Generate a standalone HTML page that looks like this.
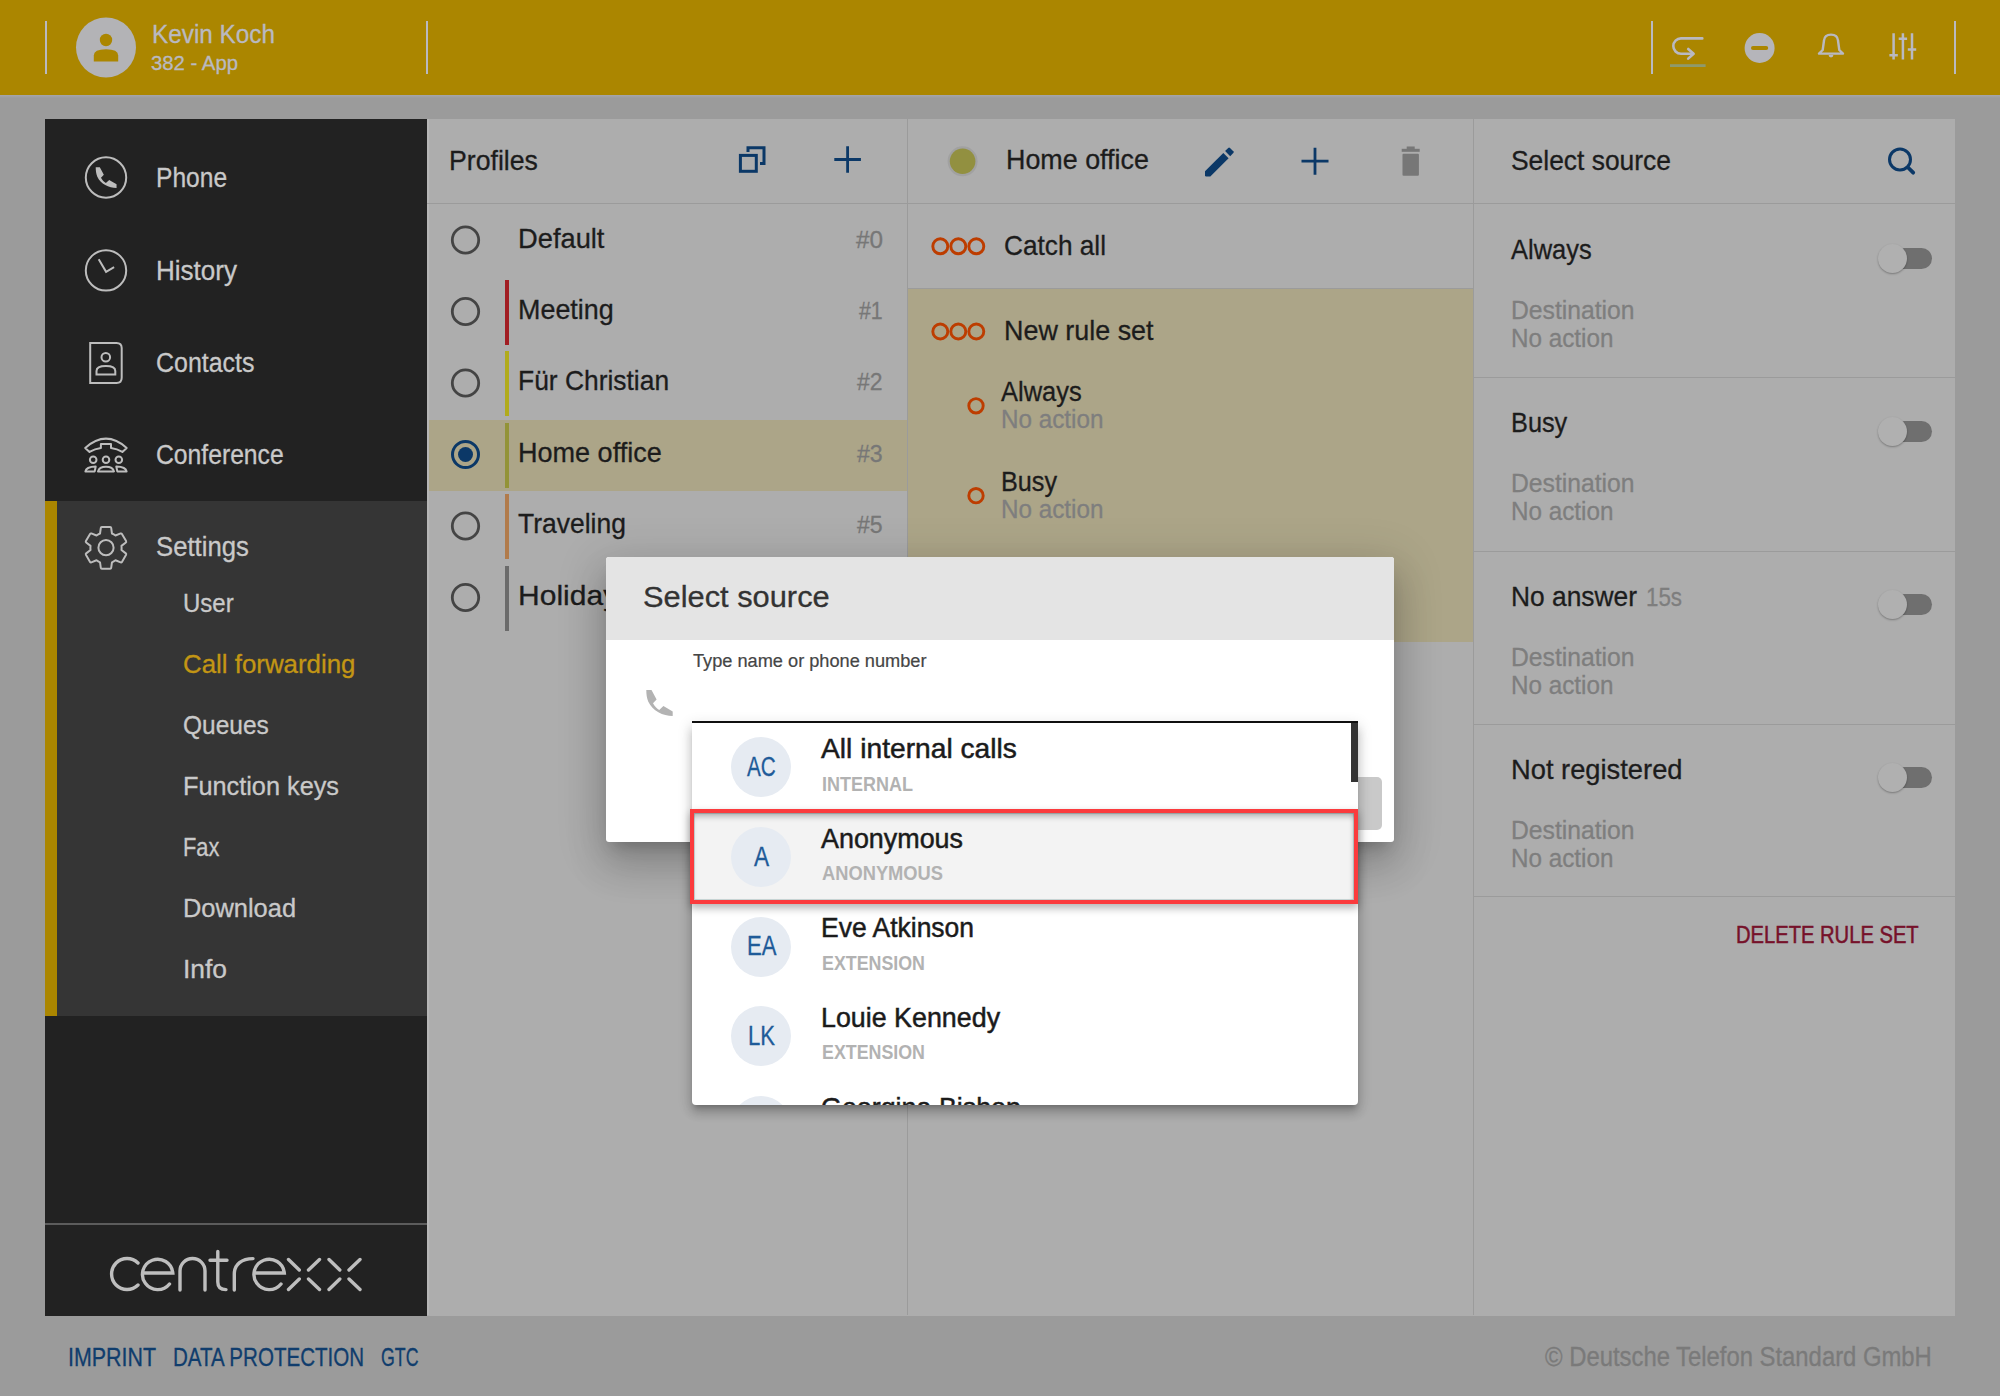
<!DOCTYPE html><html><head><meta charset="utf-8"><style>
html,body{margin:0;padding:0;width:2000px;height:1396px;overflow:hidden;background:#9b9b9b;}
body{position:relative;font-family:"Liberation Sans",sans-serif;}
.t{position:absolute;white-space:nowrap;}
.b{position:absolute;}
svg{position:absolute;overflow:visible;}
</style></head><body>
<div class="b" style="left:0;top:0;width:2000px;height:95px;background:#ab8600;"></div><div class="b" style="left:0;top:95px;width:2000px;height:3px;background:linear-gradient(#a6a6ab,#9b9b9b);"></div><div class="b" style="left:45px;top:21px;width:1.6px;height:53px;background:#b9b9c1;"></div><div class="b" style="left:426px;top:21px;width:1.6px;height:53px;background:#b9b9c1;"></div><div class="b" style="left:1651px;top:21px;width:1.6px;height:53px;background:#b9b9c1;"></div><div class="b" style="left:1954px;top:21px;width:1.6px;height:53px;background:#b9b9c1;"></div><svg style="left:0;top:0" width="2000" height="95">
<circle cx="106" cy="47.5" r="30" fill="#b3b3b6"/>
<circle cx="106" cy="40" r="6.2" fill="#ab8600"/>
<path d="M93.8 61.5 V55.5 Q93.8 49.3 106 49.3 Q118.2 49.3 118.2 55.5 V61.5 Z" fill="#ab8600"/>
<g fill="none" stroke="#b9b9c1" stroke-width="2.6" stroke-linecap="round" stroke-linejoin="round">
<path d="M1702.3 38.4 H1681 A7.7 7.7 0 0 0 1681 53.8 H1693"/>
<path d="M1688.2 49 L1693.6 53.8 L1688.2 58.6"/>
</g>
<rect x="1670" y="64.2" width="35.6" height="2.8" fill="#8e9a6c"/>
<circle cx="1759.6" cy="48" r="15" fill="#b5b5ba"/>
<rect x="1751" y="45.9" width="17.2" height="4.2" rx="2" fill="#ab8600"/>
<path d="M1819 53.6 H1843 L1839.3 50 L1838 40.5 Q1837.5 34.6 1831 34.6 Q1824.5 34.6 1824 40.5 L1822.7 50 Z" fill="none" stroke="#b9b9c1" stroke-width="2.4" stroke-linejoin="round"/>
<path d="M1828.6 55 A2.4 2.4 0 0 0 1833.4 55 Z" fill="#b9b9c1"/>
<g fill="none" stroke="#b9b9c1" stroke-width="2.5">
<path d="M1893.6 33.2 V59.6 M1902.9 33.2 V59.6 M1912 33.2 V59.6"/>
<path d="M1889.4 55.2 H1897.8 M1898.7 38.8 H1907.1 M1907.8 49.4 H1916.2"/>
</g>
</svg><div class="t" style="left:152.00px;top:21px;font-size:26px;line-height:26px;color:#b9b9c1;transform:scaleX(0.9349);transform-origin:0 0;-webkit-text-stroke:0.3px #b9b9c1;">Kevin Koch</div>
<div class="t" style="left:151.00px;top:52px;font-size:21px;line-height:21px;color:#b9b9c1;transform:scaleX(0.9680);transform-origin:0 0;-webkit-text-stroke:0.3px #b9b9c1;">382 - App</div>
<div class="b" style="left:45px;top:119px;width:382px;height:1197px;background:#222222;"></div><div class="b" style="left:45px;top:501px;width:382px;height:515px;background:#353535;"></div><div class="b" style="left:45px;top:501px;width:12px;height:515px;background:#ab8600;"></div><div class="b" style="left:45px;top:1223px;width:382px;height:2px;background:#5c5c5c;"></div><svg style="left:0;top:0" width="430" height="1396">
<g fill="none" stroke="#bdbdbd" stroke-width="2">
<circle cx="106" cy="177.5" r="20.2"/>
<circle cx="106" cy="270.4" r="20.2"/>
<path d="M98.7 259.2 L106.1 271.8 L114.1 267.2"/>
<path d="M90.2 342.9 H116.5 Q121.7 342.9 121.7 348.1 V377.8 Q121.7 383 116.5 383 H90.2 Z"/>
<circle cx="105.8" cy="357.3" r="4.3"/>
<path d="M96.5 374.6 V371 Q96.5 366.1 105.9 366.1 Q115.3 366.1 115.3 371 V374.6 Z"/>
<path d="M85.2 447.9 Q106 429.3 126.7 447.9 L122.4 451.9 Q117 448.6 111 447.9 V444 H100.9 V447.9 Q95 448.6 89.5 451.9 Z" stroke-linejoin="round"/>
<circle cx="93.2" cy="459.7" r="3.3"/><circle cx="106" cy="459.7" r="3.3"/><circle cx="118.8" cy="459.7" r="3.3"/>
<path d="M85.4 471.4 Q86.2 466.8 95.7 466.5 L94.7 471.4 Z" stroke-linejoin="round"/>
<path d="M98 471.4 Q99.2 466.8 106 466.8 Q112.8 466.8 114 471.4 Z" stroke-linejoin="round"/>
<path d="M126.6 471.4 Q125.8 466.8 116.3 466.5 L117.3 471.4 Z" stroke-linejoin="round"/>
<circle cx="106" cy="547.7" r="7.6"/>
</g>
<path transform="translate(95.7,167.3) scale(0.79) translate(-646.3,-690)" d="M646.3 690 H651.5 L656.6 699.4 L653 703.2 C654.8 706.3 656.8 708.4 659.2 710 L663.4 706.1 L672.7 711.6 V716.1 C663 716 652.5 711 648.2 701.5 C646.8 698 646.3 694 646.3 690 Z" fill="#bdbdbd"/>
</svg><svg style="left:0;top:0" width="430" height="1396"><path transform="translate(106,547.9) scale(2.08) translate(-12,-12)" d="M19.43 12.98c.04-.32.07-.64.07-.98 0-.34-.03-.66-.07-.98l2.11-1.65c.19-.15.24-.42.12-.64l-2-3.46c-.09-.16-.26-.25-.44-.25-.06 0-.12.01-.17.03l-2.49 1c-.52-.4-1.08-.73-1.690-.98l-.38-2.65C14.46 2.18 14.25 2 14 2h-4c-.25 0-.46.18-.49.42l-.38 2.65c-.61.25-1.17.59-1.69.98l-2.49-1c-.06-.02-.12-.03-.18-.03-.17 0-.34.09-.43.25l-2 3.46c-.13.22-.07.49.12.64l2.11 1.65c-.04.32-.07.65-.07.98 0 .33.03.66.07.98l-2.11 1.65c-.19.15-.24.42-.12.64l2 3.46c.09.16.26.25.44.25.06 0 .12-.01.17-.03l2.49-1c.52.4 1.08.73 1.69.98l.38 2.65c.03.24.24.42.49.42h4c.25 0 .46-.18.49-.42l.38-2.65c.61-.25 1.17-.59 1.69-.98l2.49 1c.06.02.12.03.18.03.17 0 .34-.09.43-.25l2-3.46c.12-.22.07-.49-.12-.64l-2.11-1.650z" fill="none" stroke="#bdbdbd" stroke-width="0.95" stroke-linejoin="round"/></svg><div class="t" style="left:156.00px;top:165px;font-size:27px;line-height:27px;color:#c9c9c9;transform:scaleX(0.9099);transform-origin:0 0;-webkit-text-stroke:0.3px #c9c9c9;">Phone</div>
<div class="t" style="left:156.00px;top:258px;font-size:27px;line-height:27px;color:#c9c9c9;transform:scaleX(0.9646);transform-origin:0 0;-webkit-text-stroke:0.3px #c9c9c9;">History</div>
<div class="t" style="left:156.00px;top:350px;font-size:27px;line-height:27px;color:#c9c9c9;transform:scaleX(0.9236);transform-origin:0 0;-webkit-text-stroke:0.3px #c9c9c9;">Contacts</div>
<div class="t" style="left:156.00px;top:442px;font-size:27px;line-height:27px;color:#c9c9c9;transform:scaleX(0.9148);transform-origin:0 0;-webkit-text-stroke:0.3px #c9c9c9;">Conference</div>
<div class="t" style="left:155.50px;top:534px;font-size:27px;line-height:27px;color:#c9c9c9;transform:scaleX(0.9511);transform-origin:0 0;-webkit-text-stroke:0.3px #c9c9c9;">Settings</div>
<div class="t" style="left:183.00px;top:591px;font-size:25px;line-height:25px;color:#c9c9c9;transform:scaleX(0.9592);transform-origin:0 0;-webkit-text-stroke:0.3px #c9c9c9;">User</div>
<div class="t" style="left:183.00px;top:652px;font-size:25px;line-height:25px;color:#c39614;transform:scaleX(1.0345);transform-origin:0 0;-webkit-text-stroke:0.3px #c39614;">Call forwarding</div>
<div class="t" style="left:183.00px;top:713px;font-size:25px;line-height:25px;color:#c9c9c9;transform:scaleX(0.9794);transform-origin:0 0;-webkit-text-stroke:0.3px #c9c9c9;">Queues</div>
<div class="t" style="left:183.00px;top:774px;font-size:25px;line-height:25px;color:#c9c9c9;transform:scaleX(1.0113);transform-origin:0 0;-webkit-text-stroke:0.3px #c9c9c9;">Function keys</div>
<div class="t" style="left:183.00px;top:835px;font-size:25px;line-height:25px;color:#c9c9c9;transform:scaleX(0.8719);transform-origin:0 0;-webkit-text-stroke:0.3px #c9c9c9;">Fax</div>
<div class="t" style="left:183.00px;top:896px;font-size:25px;line-height:25px;color:#c9c9c9;transform:scaleX(1.0166);transform-origin:0 0;-webkit-text-stroke:0.3px #c9c9c9;">Download</div>
<div class="t" style="left:183.00px;top:957px;font-size:25px;line-height:25px;color:#c9c9c9;transform:scaleX(1.0563);transform-origin:0 0;-webkit-text-stroke:0.3px #c9c9c9;">Info</div>
<svg style="left:0;top:0" width="430" height="1396">
<g fill="none" stroke="#bebebe" stroke-width="3.4" stroke-linecap="round">
<path d="M138 1263 A15.5 15.5 0 1 0 138 1285"/>
<path d="M143.5 1273 H172.8 A15.2 15.2 0 1 0 169.5 1284"/>
<path d="M180 1290 V1271 A12.5 12.5 0 0 1 205 1271 V1290"/>
<path d="M217.8 1251.5 V1282 Q217.8 1289.6 226 1289.6 M210 1260.3 H227"/>
<path d="M234.3 1290 V1274 C234.3 1264 242 1258.6 253 1258.6"/>
<path d="M255 1273 H284.3 A15.2 15.2 0 1 0 281 1284"/>
<path d="M288.5 1259.5 L299.3 1270 M319.5 1259.5 L308.5 1270 M288.5 1289.5 L299.3 1279 M319.5 1289.5 L308.5 1279"/>
<path d="M329 1259.5 L339.8 1270 M360 1259.5 L349 1270 M329 1289.5 L339.8 1279 M360 1289.5 L349 1279"/>
</g></svg><div class="b" style="left:427px;top:119px;width:1528px;height:1197px;background:#adadad;"></div><div class="b" style="left:427px;top:119px;width:2px;height:1196px;background:#b6b6b6;"></div><div class="b" style="left:907px;top:119px;width:1px;height:1196px;background:#9b9b9b;"></div><div class="b" style="left:1473px;top:119px;width:1px;height:1196px;background:#9b9b9b;"></div><div class="b" style="left:427px;top:203px;width:1528px;height:1px;background:#9b9b9b;"></div><div class="t" style="left:449.00px;top:147px;font-size:28px;line-height:28px;color:#1c1c1c;transform:scaleX(0.9524);transform-origin:0 0;-webkit-text-stroke:0.3px #1c1c1c;">Profiles</div>
<svg style="left:0;top:0" width="2000" height="1396">
<g fill="none" stroke="#0b3867" stroke-width="3">
<rect x="740.4" y="155.4" width="15.9" height="15.9"/>
<path d="M748 152 V147.7 H764 V163.6 H760"/>
<path d="M834.3 159.5 H860.9 M847.6 146.2 V172.8" stroke-width="2.8"/>
<path d="M1301.5 161.2 H1328.5 M1315 147.7 V174.7" stroke-width="2.8"/>
</g>
<path d="M1205 171.2 L1223.3 152.9 L1228.6 158.2 L1210.3 176.5 L1206.2 176.5 Q1205 176.5 1205 175.3 Z" fill="#0b3867"/>
<path d="M1225.1 151.1 L1228.2 148 Q1229.1 147.1 1230 148 L1233.3 151.3 Q1234.2 152.2 1233.3 153.1 L1230.2 156.2 Z" fill="#0b3867"/>
<rect x="1401.7" y="148.8" width="18" height="3" fill="#777777"/>
<rect x="1406.7" y="146.5" width="8" height="3" fill="#777777"/>
<rect x="1402.5" y="153.8" width="16.4" height="21.9" rx="1" fill="#777777"/>
<circle cx="962.6" cy="161.3" r="15" fill="#a1a1a1"/>
<circle cx="962.6" cy="161.3" r="12.8" fill="#929040"/>
<g fill="none" stroke="#0b3867" stroke-width="3"><circle cx="1900" cy="159.5" r="10.5"/><path d="M1908 167.5 L1913.2 172.7" stroke-linecap="round" stroke-width="3.8"/></g>
</svg><svg style="left:0;top:0" width="600" height="700"><circle cx="465.5" cy="240.0" r="13.2" fill="none" stroke="#444" stroke-width="2.8"/></svg><div class="t" style="left:517.50px;top:225px;font-size:28px;line-height:28px;color:#1c1c1c;transform:scaleX(0.9745);transform-origin:0 0;-webkit-text-stroke:0.3px #1c1c1c;">Default</div>
<div class="t" style="left:855.50px;top:228px;font-size:24px;line-height:24px;color:#777777;transform:scaleX(1.0135);transform-origin:0 0;-webkit-text-stroke:0.3px #777777;">#0</div>
<div class="b" style="left:505px;top:279.5px;width:4px;height:65px;background:#a11d23;"></div><svg style="left:0;top:0" width="600" height="700"><circle cx="465.5" cy="311.5" r="13.2" fill="none" stroke="#444" stroke-width="2.8"/></svg><div class="t" style="left:517.50px;top:296px;font-size:28px;line-height:28px;color:#1c1c1c;transform:scaleX(0.9611);transform-origin:0 0;-webkit-text-stroke:0.3px #1c1c1c;">Meeting</div>
<div class="t" style="left:858.80px;top:299px;font-size:24px;line-height:24px;color:#777777;transform:scaleX(0.8896);transform-origin:0 0;-webkit-text-stroke:0.3px #777777;">#1</div>
<div class="b" style="left:505px;top:351.0px;width:4px;height:65px;background:#b1ab1c;"></div><svg style="left:0;top:0" width="600" height="700"><circle cx="465.5" cy="383.0" r="13.2" fill="none" stroke="#444" stroke-width="2.8"/></svg><div class="t" style="left:517.50px;top:367px;font-size:28px;line-height:28px;color:#1c1c1c;transform:scaleX(0.9428);transform-origin:0 0;-webkit-text-stroke:0.3px #1c1c1c;">Für Christian</div>
<div class="t" style="left:857.00px;top:370px;font-size:24px;line-height:24px;color:#777777;transform:scaleX(0.9572);transform-origin:0 0;-webkit-text-stroke:0.3px #777777;">#2</div>
<div class="b" style="left:429px;top:419.5px;width:478px;height:71.5px;background:#aca588;"></div><div class="b" style="left:505px;top:422.5px;width:4px;height:65px;background:#939337;"></div><svg style="left:0;top:0" width="600" height="700"><circle cx="465.5" cy="454.5" r="13" fill="none" stroke="#0b3867" stroke-width="3"/><circle cx="465.5" cy="454.5" r="7.5" fill="#0b3867"/></svg><div class="t" style="left:517.50px;top:439px;font-size:28px;line-height:28px;color:#1c1c1c;transform:scaleX(0.9654);transform-origin:0 0;-webkit-text-stroke:0.3px #1c1c1c;">Home office</div>
<div class="t" style="left:856.90px;top:442px;font-size:24px;line-height:24px;color:#777777;transform:scaleX(0.9610);transform-origin:0 0;-webkit-text-stroke:0.3px #777777;">#3</div>
<div class="b" style="left:505px;top:494.0px;width:4px;height:65px;background:#b17b4b;"></div><svg style="left:0;top:0" width="600" height="700"><circle cx="465.5" cy="526.0" r="13.2" fill="none" stroke="#444" stroke-width="2.8"/></svg><div class="t" style="left:517.50px;top:510px;font-size:28px;line-height:28px;color:#1c1c1c;transform:scaleX(0.9454);transform-origin:0 0;-webkit-text-stroke:0.3px #1c1c1c;">Traveling</div>
<div class="t" style="left:856.90px;top:513px;font-size:24px;line-height:24px;color:#777777;transform:scaleX(0.9610);transform-origin:0 0;-webkit-text-stroke:0.3px #777777;">#5</div>
<div class="b" style="left:505px;top:565.5px;width:4px;height:65px;background:#6b6b6b;"></div><svg style="left:0;top:0" width="600" height="700"><circle cx="465.5" cy="597.5" r="13.2" fill="none" stroke="#444" stroke-width="2.8"/></svg><div class="t" style="left:517.50px;top:582px;font-size:28px;line-height:28px;color:#1c1c1c;transform:scaleX(1.0725);transform-origin:0 0;-webkit-text-stroke:0.3px #1c1c1c;">Holiday</div>
<div class="t" style="left:1006.40px;top:146px;font-size:28px;line-height:28px;color:#1c1c1c;transform:scaleX(0.9600);transform-origin:0 0;-webkit-text-stroke:0.3px #1c1c1c;">Home office</div>
<div class="b" style="left:908px;top:288px;width:565px;height:1px;background:#9b9b9b;"></div><div class="b" style="left:908px;top:289px;width:565px;height:353px;background:#aca588;"></div><svg style="left:0;top:0" width="2000" height="1396"><g fill="none" stroke="#bd3d00" stroke-width="2.9"><circle cx="940.3" cy="246.3" r="7.5" /><circle cx="958.3" cy="246.3" r="7.5" /><circle cx="976.3" cy="246.3" r="7.5" /><circle cx="940.3" cy="331.5" r="7.5" /><circle cx="958.3" cy="331.5" r="7.5" /><circle cx="976.3" cy="331.5" r="7.5" /><circle cx="976" cy="405.8" r="7.2"/><circle cx="976" cy="495.7" r="7.2"/></g></svg><div class="t" style="left:1004.30px;top:232px;font-size:28px;line-height:28px;color:#1c1c1c;transform:scaleX(0.9365);transform-origin:0 0;-webkit-text-stroke:0.3px #1c1c1c;">Catch all</div>
<div class="t" style="left:1004.40px;top:317px;font-size:28px;line-height:28px;color:#1c1c1c;transform:scaleX(0.9609);transform-origin:0 0;-webkit-text-stroke:0.3px #1c1c1c;">New rule set</div>
<div class="t" style="left:1001.00px;top:379px;font-size:27px;line-height:27px;color:#1c1c1c;transform:scaleX(0.9429);transform-origin:0 0;-webkit-text-stroke:0.3px #1c1c1c;">Always</div>
<div class="t" style="left:1001.00px;top:407px;font-size:25px;line-height:25px;color:#7e7e7e;transform:scaleX(0.9697);transform-origin:0 0;-webkit-text-stroke:0.3px #7e7e7e;">No action</div>
<div class="t" style="left:1001.00px;top:469px;font-size:27px;line-height:27px;color:#1c1c1c;transform:scaleX(0.9343);transform-origin:0 0;-webkit-text-stroke:0.3px #1c1c1c;">Busy</div>
<div class="t" style="left:1001.00px;top:497px;font-size:25px;line-height:25px;color:#7e7e7e;transform:scaleX(0.9697);transform-origin:0 0;-webkit-text-stroke:0.3px #7e7e7e;">No action</div>
<div class="t" style="left:1511.00px;top:147px;font-size:28px;line-height:28px;color:#1c1c1c;transform:scaleX(0.9430);transform-origin:0 0;-webkit-text-stroke:0.3px #1c1c1c;">Select source</div>
<div class="t" style="left:1511.00px;top:236px;font-size:28px;line-height:28px;color:#1c1c1c;transform:scaleX(0.9092);transform-origin:0 0;-webkit-text-stroke:0.3px #1c1c1c;">Always</div>
<div class="t" style="left:1511.00px;top:297px;font-size:26px;line-height:26px;color:#7e7e7e;transform:scaleX(0.9500);transform-origin:0 0;-webkit-text-stroke:0.3px #7e7e7e;">Destination</div>
<div class="t" style="left:1511.00px;top:325px;font-size:26px;line-height:26px;color:#7e7e7e;transform:scaleX(0.9324);transform-origin:0 0;-webkit-text-stroke:0.3px #7e7e7e;">No action</div>
<div class="b" style="left:1892px;top:247.5px;width:39.5px;height:21px;border-radius:10.5px;background:#6f6f6f;"></div><div class="b" style="left:1878px;top:243.5px;width:29px;height:29px;border-radius:50%;background:#b0b0b0;box-shadow:0 1px 2px rgba(0,0,0,.3);"></div><div class="b" style="left:1474px;top:377.3px;width:481px;height:1px;background:#9b9b9b;"></div><div class="t" style="left:1511.00px;top:409px;font-size:28px;line-height:28px;color:#1c1c1c;transform:scaleX(0.9041);transform-origin:0 0;-webkit-text-stroke:0.3px #1c1c1c;">Busy</div>
<div class="t" style="left:1511.00px;top:470px;font-size:26px;line-height:26px;color:#7e7e7e;transform:scaleX(0.9500);transform-origin:0 0;-webkit-text-stroke:0.3px #7e7e7e;">Destination</div>
<div class="t" style="left:1511.00px;top:498px;font-size:26px;line-height:26px;color:#7e7e7e;transform:scaleX(0.9324);transform-origin:0 0;-webkit-text-stroke:0.3px #7e7e7e;">No action</div>
<div class="b" style="left:1892px;top:420.8px;width:39.5px;height:21px;border-radius:10.5px;background:#6f6f6f;"></div><div class="b" style="left:1878px;top:416.8px;width:29px;height:29px;border-radius:50%;background:#b0b0b0;box-shadow:0 1px 2px rgba(0,0,0,.3);"></div><div class="b" style="left:1474px;top:550.6px;width:481px;height:1px;background:#9b9b9b;"></div><div class="t" style="left:1511.00px;top:583px;font-size:28px;line-height:28px;color:#1c1c1c;transform:scaleX(0.9414);transform-origin:0 0;-webkit-text-stroke:0.3px #1c1c1c;">No answer</div>
<div class="t" style="left:1646.40px;top:584px;font-size:26px;line-height:26px;color:#7e7e7e;transform:scaleX(0.8600);transform-origin:0 0;-webkit-text-stroke:0.3px #7e7e7e;">15s</div>
<div class="t" style="left:1511.00px;top:644px;font-size:26px;line-height:26px;color:#7e7e7e;transform:scaleX(0.9500);transform-origin:0 0;-webkit-text-stroke:0.3px #7e7e7e;">Destination</div>
<div class="t" style="left:1511.00px;top:672px;font-size:26px;line-height:26px;color:#7e7e7e;transform:scaleX(0.9324);transform-origin:0 0;-webkit-text-stroke:0.3px #7e7e7e;">No action</div>
<div class="b" style="left:1892px;top:594.1px;width:39.5px;height:21px;border-radius:10.5px;background:#6f6f6f;"></div><div class="b" style="left:1878px;top:590.1px;width:29px;height:29px;border-radius:50%;background:#b0b0b0;box-shadow:0 1px 2px rgba(0,0,0,.3);"></div><div class="b" style="left:1474px;top:723.9px;width:481px;height:1px;background:#9b9b9b;"></div><div class="t" style="left:1511.00px;top:756px;font-size:28px;line-height:28px;color:#1c1c1c;transform:scaleX(0.9753);transform-origin:0 0;-webkit-text-stroke:0.3px #1c1c1c;">Not registered</div>
<div class="t" style="left:1511.00px;top:817px;font-size:26px;line-height:26px;color:#7e7e7e;transform:scaleX(0.9500);transform-origin:0 0;-webkit-text-stroke:0.3px #7e7e7e;">Destination</div>
<div class="t" style="left:1511.00px;top:845px;font-size:26px;line-height:26px;color:#7e7e7e;transform:scaleX(0.9324);transform-origin:0 0;-webkit-text-stroke:0.3px #7e7e7e;">No action</div>
<div class="b" style="left:1892px;top:767.4px;width:39.5px;height:21px;border-radius:10.5px;background:#6f6f6f;"></div><div class="b" style="left:1878px;top:763.4px;width:29px;height:29px;border-radius:50%;background:#b0b0b0;box-shadow:0 1px 2px rgba(0,0,0,.3);"></div><div class="b" style="left:1474px;top:896px;width:481px;height:1px;background:#9b9b9b;"></div><div class="t" style="left:1736.00px;top:924px;font-size:23px;line-height:23px;color:#76112a;transform:scaleX(0.8768);transform-origin:0 0;-webkit-text-stroke:0.5px #76112a;">DELETE RULE SET</div>
<div class="t" style="left:68.00px;top:1345px;font-size:25px;line-height:25px;color:#103d6d;transform:scaleX(0.8564);transform-origin:0 0;-webkit-text-stroke:0.3px #103d6d;">IMPRINT</div>
<div class="t" style="left:172.50px;top:1345px;font-size:25px;line-height:25px;color:#103d6d;transform:scaleX(0.8224);transform-origin:0 0;-webkit-text-stroke:0.3px #103d6d;">DATA PROTECTION</div>
<div class="t" style="left:380.50px;top:1345px;font-size:25px;line-height:25px;color:#103d6d;transform:scaleX(0.7109);transform-origin:0 0;-webkit-text-stroke:0.3px #103d6d;">GTC</div>
<div class="t" style="left:1544.90px;top:1344px;font-size:27px;line-height:27px;color:#7a7a7a;transform:scaleX(0.8829);transform-origin:0 0;-webkit-text-stroke:0.3px #7a7a7a;">© Deutsche Telefon Standard GmbH</div>
<div class="b" style="left:606px;top:557px;width:787.5px;height:285px;background:#fff;border-radius:3px;box-shadow:0 11px 15px -7px rgba(0,0,0,.2),0 24px 38px 3px rgba(0,0,0,.14),0 9px 46px 8px rgba(0,0,0,.12);overflow:hidden;"><div class="b" style="left:0;top:0;width:100%;height:83px;background:#e4e4e4;"></div></div><div class="t" style="left:642.80px;top:582px;font-size:30px;line-height:30px;color:#333333;transform:scaleX(1.0270);transform-origin:0 0;-webkit-text-stroke:0.3px #333333;">Select source</div>
<div class="t" style="left:693.20px;top:652px;font-size:18px;line-height:18px;color:#454545;transform:scaleX(1.0103);transform-origin:0 0;-webkit-text-stroke:0.2px #454545;">Type name or phone number</div>
<svg style="left:0;top:0" width="2000" height="1396"><path d="M646.3 690 H651.5 L656.6 699.4 L653 703.2 C654.8 706.3 656.8 708.4 659.2 710 L663.4 706.1 L672.7 711.6 V716.1 C663 716 652.5 711 648.2 701.5 C646.8 698 646.3 694 646.3 690 Z" fill="#b3b3b3"/></svg><div class="b" style="left:1352px;top:776.5px;width:30px;height:53.5px;border-radius:5px;background:#c9c9c9;"></div><div class="b" style="left:692px;top:720.5px;width:666px;height:2.5px;background:#111;"></div><div class="b" style="left:692px;top:723px;width:666px;height:381.5px;border-radius:0 0 4px 4px;background:#fff;box-shadow:0 5px 5px -3px rgba(0,0,0,.2),0 8px 10px 1px rgba(0,0,0,.14),0 3px 14px 2px rgba(0,0,0,.12);overflow:hidden;"><div class="b" style="left:659px;top:0;width:7px;height:59px;background:#333;"></div></div><div class="b" style="left:690px;top:809.3px;width:668px;height:95px;box-sizing:border-box;border:4.5px solid #fb3b3d;background:#f3f3f3;box-shadow:0 4px 8px rgba(0,0,0,.3), inset 0 6px 6px -3px rgba(0,0,0,.3), inset -4px 0 5px -3px rgba(0,0,0,.15), inset 0 0 0 1px #c9d6d6;"></div><div class="b" style="left:692px;top:723px;width:666px;height:381.5px;border-radius:0 0 4px 4px;overflow:hidden;"><div class="b" style="left:39px;top:14.4px;width:60px;height:60px;border-radius:50%;background:#e6ebf2;"></div><div class="t" style="left:55.20px;top:31px;font-size:27px;line-height:27px;color:#1f5b99;transform:scaleX(0.7674);transform-origin:0 0;-webkit-text-stroke:0.3px #1f5b99;">AC</div>
<div class="t" style="left:129.00px;top:12px;font-size:28px;line-height:28px;color:#1b1b1b;transform:scaleX(1.0072);transform-origin:0 0;-webkit-text-stroke:0.5px #1b1b1b;">All internal calls</div>
<div class="t" style="left:129.60px;top:51px;font-size:20px;line-height:20px;color:#b2b2b2;transform:scaleX(0.8992);transform-origin:0 0;font-weight:bold;">INTERNAL</div>
<div class="b" style="left:39px;top:104.0px;width:60px;height:60px;border-radius:50%;background:#e6ebf2;"></div><div class="t" style="left:61.60px;top:121px;font-size:27px;line-height:27px;color:#1f5b99;transform:scaleX(0.8402);transform-origin:0 0;-webkit-text-stroke:0.3px #1f5b99;">A</div>
<div class="t" style="left:129.00px;top:102px;font-size:28px;line-height:28px;color:#1b1b1b;transform:scaleX(0.9605);transform-origin:0 0;-webkit-text-stroke:0.5px #1b1b1b;">Anonymous</div>
<div class="t" style="left:129.60px;top:140px;font-size:20px;line-height:20px;color:#b2b2b2;transform:scaleX(0.9153);transform-origin:0 0;font-weight:bold;">ANONYMOUS</div>
<div class="b" style="left:39px;top:193.6px;width:60px;height:60px;border-radius:50%;background:#e6ebf2;"></div><div class="t" style="left:55.30px;top:210px;font-size:27px;line-height:27px;color:#1f5b99;transform:scaleX(0.8181);transform-origin:0 0;-webkit-text-stroke:0.3px #1f5b99;">EA</div>
<div class="t" style="left:129.00px;top:191px;font-size:28px;line-height:28px;color:#1b1b1b;transform:scaleX(0.9454);transform-origin:0 0;-webkit-text-stroke:0.5px #1b1b1b;">Eve Atkinson</div>
<div class="t" style="left:129.60px;top:230px;font-size:20px;line-height:20px;color:#b2b2b2;transform:scaleX(0.8910);transform-origin:0 0;font-weight:bold;">EXTENSION</div>
<div class="b" style="left:39px;top:283.2px;width:60px;height:60px;border-radius:50%;background:#e6ebf2;"></div><div class="t" style="left:56.40px;top:300px;font-size:27px;line-height:27px;color:#1f5b99;transform:scaleX(0.8197);transform-origin:0 0;-webkit-text-stroke:0.3px #1f5b99;">LK</div>
<div class="t" style="left:129.00px;top:281px;font-size:28px;line-height:28px;color:#1b1b1b;transform:scaleX(0.9584);transform-origin:0 0;-webkit-text-stroke:0.5px #1b1b1b;">Louie Kennedy</div>
<div class="t" style="left:129.60px;top:319px;font-size:20px;line-height:20px;color:#b2b2b2;transform:scaleX(0.8910);transform-origin:0 0;font-weight:bold;">EXTENSION</div>
<div class="b" style="left:39px;top:372.8px;width:60px;height:60px;border-radius:50%;background:#e6ebf2;"></div><div class="t" style="left:55.50px;top:389px;font-size:27px;line-height:27px;color:#1f5b99;transform:scaleX(0.7459);transform-origin:0 0;-webkit-text-stroke:0.3px #1f5b99;">GB</div>
<div class="t" style="left:129.00px;top:371px;font-size:28px;line-height:28px;color:#1b1b1b;transform:scaleX(0.9588);transform-origin:0 0;-webkit-text-stroke:0.5px #1b1b1b;">Georgina Bishop</div>
<div class="t" style="left:129.60px;top:409px;font-size:20px;line-height:20px;color:#b2b2b2;transform:scaleX(0.8910);transform-origin:0 0;font-weight:bold;">EXTENSION</div>
</div></body></html>
